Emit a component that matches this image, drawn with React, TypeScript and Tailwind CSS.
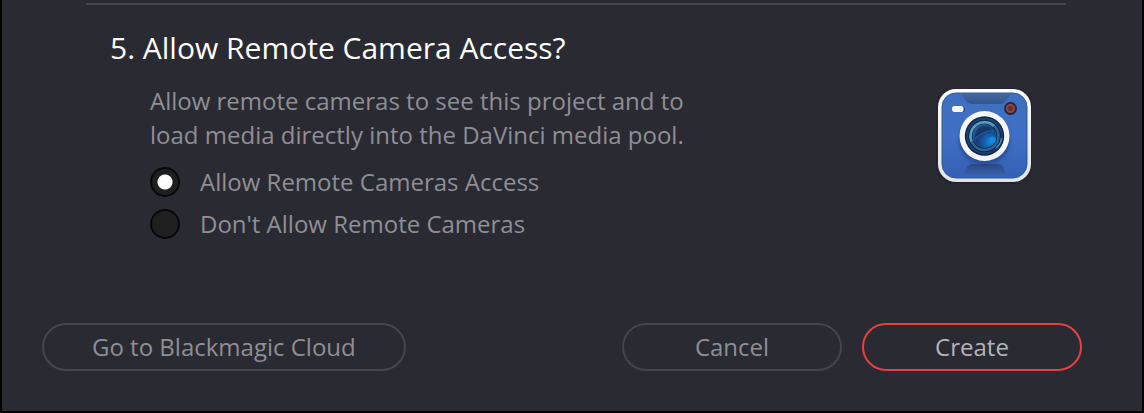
import { useState } from "react";

function CameraIcon() {
  return (
    <svg viewBox="0 0 96 96" className="size-24 shrink-0" role="img" aria-label="Camera">
      <defs>
        <linearGradient id="body" x1="0" y1="0" x2="0" y2="1">
          <stop offset="0" stopColor="#3f70bf" />
          <stop offset="0.5" stopColor="#3f6fc4" />
          <stop offset="1" stopColor="#3560b4" />
        </linearGradient>
        <linearGradient id="frame" x1="0" y1="0" x2="0" y2="1">
          <stop offset="0" stopColor="#ffffff" />
          <stop offset="1" stopColor="#dfe5e6" />
        </linearGradient>
        <linearGradient id="top" x1="0" y1="0" x2="0" y2="1">
          <stop offset="0" stopColor="#41679f" />
          <stop offset="1" stopColor="#34568f" />
        </linearGradient>
        <linearGradient id="bottom" x1="0" y1="0" x2="0" y2="1">
          <stop offset="0" stopColor="#294887" />
          <stop offset="1" stopColor="#3c66b2" />
        </linearGradient>
        <radialGradient id="glass" cx="0.75" cy="0.75" r="0.85">
          <stop offset="0" stopColor="#1689e0" />
          <stop offset="0.3" stopColor="#1560b0" />
          <stop offset="0.65" stopColor="#163c74" />
          <stop offset="1" stopColor="#2a609c" />
        </radialGradient>
        <filter id="shade" x="-20%" y="-20%" width="140%" height="140%">
          <feGaussianBlur stdDeviation="1.5" />
        </filter>
      </defs>
      <rect x="2" y="2" width="93" height="93" rx="18" fill="#15151b" opacity="0.7" filter="url(#shade)" />
      <rect x="2" y="1" width="93" height="93" rx="18" fill="url(#frame)" />
      <rect x="6" y="5" width="85" height="85" rx="14" fill="url(#body)" stroke="#315a9b" strokeWidth="1" />
      <path d="M25 6H75L69 14Q67 16 64 16H36Q33 16 31 14Z" fill="url(#top)" />
      <path d="M26 89L31 79Q33 76 36 76H62Q65 76 67 79L72 89Z" fill="url(#bottom)" />
      <ellipse cx="48.5" cy="52" rx="26" ry="25" fill="#203d7c" opacity="0.55" filter="url(#shade)" />
      <rect x="16" y="19" width="13" height="5" rx="2.5" fill="#294b83" />
      <rect x="16" y="18" width="11.5" height="6" rx="2.8" fill="#fbfcfa" />
      <circle cx="74.5" cy="20.5" r="6.5" fill="#252735" />
      <circle cx="74.5" cy="20.5" r="3.7" fill="#693337" stroke="#a5494b" strokeWidth="1.5" />
      <circle cx="48.5" cy="48" r="25" fill="#f5f7f6" />
      <circle cx="48.5" cy="48" r="19.7" fill="#102346" />
      <circle cx="48.5" cy="48" r="17.3" fill="none" stroke="#1c406f" strokeWidth="2" />
      <circle cx="48.5" cy="48" r="14" fill="none" stroke="#2b6797" strokeWidth="2.5" />
      <path d="M35.500 53.500A14 14 0 0 1 58 38" fill="none" stroke="#559fba" strokeWidth="2.500" />
      <circle cx="48.5" cy="48" r="12" fill="url(#glass)" />
      <path d="M39 50Q45 45 56 44Q53 37.500 47 38Q39 40 39 50Z" fill="#153260" opacity="0.7" />
      <path d="M39 51Q47 42 58 43" fill="none" stroke="#2f66a3" strokeWidth="1" />
      <circle cx="56.5" cy="52" r="3.2" fill="#138be4" />
      <path d="M60 60Q65 56 65.500 50" fill="none" stroke="#4788b2" strokeWidth="1.500" />
    </svg>
  );
}

const choices = [
  { value: "allow", label: "Allow Remote Cameras Access" },
  { value: "deny", label: "Don't Allow Remote Cameras" },
];

const button =
  "h-12 rounded-full border-2 text-2xl leading-8 hover:bg-white/5 focus-visible:outline-2 focus-visible:outline-white/50";

export default function App() {
  const [access, setAccess] = useState("allow");

  return (
    <main className="flex min-h-screen flex-col border-x-2 border-b-2 border-black bg-[#2a2a33] pt-[3px] pb-10 font-['Open_Sans','Noto_Sans',sans-serif] text-2xl text-[#8f8f94]">
      <hr className="mr-19 ml-21 border-t-2 border-[#45454e]" />
      <section className="flex items-start justify-between pt-[23px] pr-[110px] pl-27">
        <div>
          <h2 className="text-[30px] leading-10 text-white">5. Allow Remote Camera Access?</h2>
          <div className="pt-4 pl-10">
            <p className="leading-[34px]">
              Allow remote cameras to see this project and to
              <br />
              load media directly into the DaVinci media pool.
            </p>
            <div role="radiogroup" aria-label="Remote camera access" className="mt-3.5 flex flex-col gap-2.5">
              {choices.map(({ value, label }) => (
                <label key={value} className="flex items-center gap-5 leading-8">
                  <input
                    type="radio"
                    name="access"
                    value={value}
                    checked={access === value}
                    onChange={() => setAccess(value)}
                    className="size-[30px] shrink-0 appearance-none rounded-full border-2 border-[#08080a] bg-[#1f1f20] checked:bg-[radial-gradient(circle,#ffffff_7px,#1f1f20_8px)]"
                  />
                  {label}
                </label>
              ))}
            </div>
          </div>
        </div>
        <div className="pt-15">
          <CameraIcon />
        </div>
      </section>
      <footer className="mt-auto flex items-center justify-between pr-15 pl-10">
        <button type="button" className={`${button} border-[#45454e] px-12`}>
          Go to Blackmagic Cloud
        </button>
        <div className="flex gap-5">
          <button type="button" className={`${button} w-55 border-[#45454e]`}>
            Cancel
          </button>
          <button type="button" className={`${button} w-55 border-[#e64040] text-[#b4b4b8]`}>
            Create
          </button>
        </div>
      </footer>
    </main>
  );
}
